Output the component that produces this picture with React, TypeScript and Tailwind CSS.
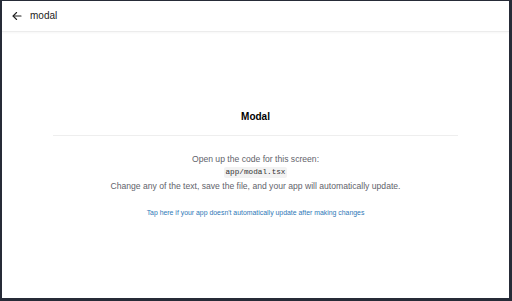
import React from "react";

export default function App() {
  return (
    <div className="w-[512px] h-[301px] bg-white border-[#262b37] border-t border-l-2 border-r-[3px] border-b-[3px] flex flex-col overflow-hidden" style={{ fontFamily: '"Liberation Sans", Arial, sans-serif' }}>
      <div className="h-[31px] flex items-center shrink-0 border-b border-[#ececec] shadow-[0_1px_2px_rgba(0,0,0,0.04)]">
        <svg className="ml-[10px]" width="10" height="10" viewBox="0 0 10 10" fill="none" stroke="#1f1f1f" strokeWidth="1.1" strokeLinecap="round" strokeLinejoin="round">
          <path d="M9 5H1.2" />
          <path d="M4.6 1.5L1.1 5l3.5 3.5" />
        </svg>
        <span className="ml-[8px] text-[10px] font-medium text-[#1c1c1c] leading-none">modal</span>
      </div>
      <div className="flex-1 flex flex-col items-center justify-center pb-[2px]">
        <div className="text-[10px] font-bold text-black leading-[14px]">Modal</div>
        <div className="w-4/5 h-px bg-[#eeeeee] mt-[11px] mb-[17px]" />
        <div className="text-[8.6px] leading-[12px] text-[#5f636b] text-center">Open up the code for this screen:</div>
        <div className="my-[2px] px-[2px] rounded-[2px] bg-[#f2f2f2] text-[7.7px] leading-[11px] text-[#333]" style={{ fontFamily: '"Liberation Mono", "DejaVu Sans Mono", monospace' }}>app/modal.tsx</div>
        <div className="text-[8.6px] leading-[12px] text-[#5f636b] text-center">Change any of the text, save the file, and your app will automatically update.</div>
        <div className="mt-[16px] text-[6.9px] leading-[10px] text-[#2e78b7] text-center">Tap here if your app doesn't automatically update after making changes</div>
      </div>
    </div>
  );
}
